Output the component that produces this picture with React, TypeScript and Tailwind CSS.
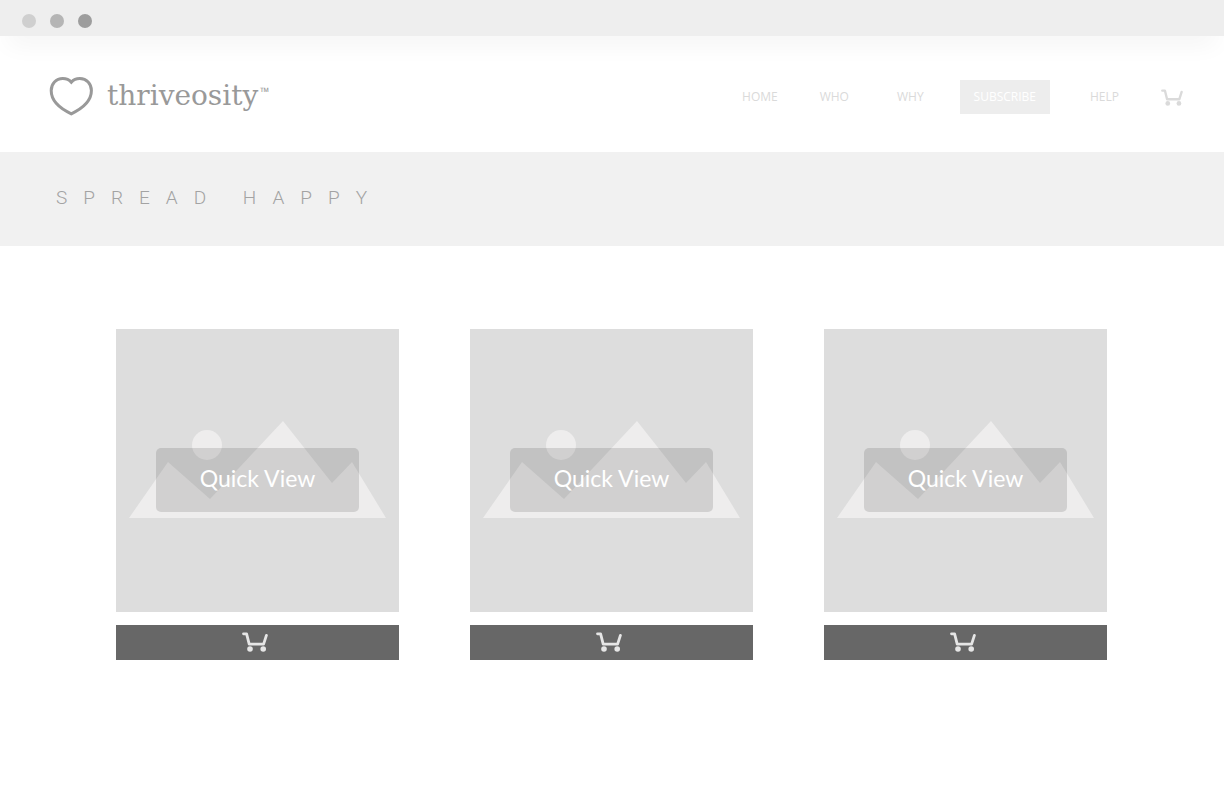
import React from 'react';

interface IconProps {
  className?: string;
}

interface Product {
  id: number;
  name: string;
}

const products: Product[] = [
  { id: 1, name: 'Product 1' },
  { id: 2, name: 'Product 2' },
  { id: 3, name: 'Product 3' }
];

function CartIcon({ className }: IconProps) {
  return (
    <svg className={className} viewBox="0 0 26 20" fill="none" aria-hidden="true">
      <path
        d="M1.5 1.8H4.6L7.2 12.1H21.6L24.4 3.4"
        stroke="currentColor"
        strokeWidth="2.8"
        strokeLinecap="round"
        strokeLinejoin="round"
      />
      <circle cx="8" cy="17" r="2.8" fill="currentColor" />
      <circle cx="21.2" cy="17" r="2.8" fill="currentColor" />
    </svg>
  );
}

function HeartLogo({ className }: IconProps) {
  return (
    <svg className={className} viewBox="0 0 44 40" fill="none" aria-hidden="true">
      <path
        d="M22.3 5.2C20 2.6 17 1.6 13.8 1.6C7 1.6 2.2 6.6 2.2 13.6C2.2 23.4 11 31.6 22.3 36.8C33.4 31.6 42.4 23.4 42.4 13.6C42.4 6.6 37.6 1.6 30.8 1.6C27.6 1.6 24.6 2.6 22.3 5.2Z"
        stroke="currentColor"
        strokeWidth="3"
      />
    </svg>
  );
}

function ProductCard({ product }: { product: Product }) {
  return (
    <article>
      <div className="relative aspect-square bg-[#dddddd]">
        <svg className="w-full h-full" viewBox="0 0 283 283" fill="#eeeded" aria-hidden="true">
          <path d="M13 189L52 133L94 170L167 92L216 154L236 133L270 189Z" />
          <circle cx="91" cy="116" r="15" />
        </svg>
        <button
          type="button"
          className="absolute inset-x-[14%] top-[42%] h-16 rounded-[5px] bg-black/12 pb-1 font-['Lato',sans-serif] text-[23px] text-white"
        >
          Quick View
        </button>
      </div>
      <button
        type="button"
        aria-label={`Add ${product.name} to cart`}
        className="mt-[13px] flex h-[35px] w-full items-center justify-center bg-[#676767] pb-0.5 text-[#e6e6e6]"
      >
        <CartIcon className="h-5 w-[26px] mr-1.5" />
      </button>
    </article>
  );
}

export default function App() {
  return (
    <div className="min-h-screen bg-white font-['Open_Sans',sans-serif]">
      {/* Window bar */}
      <div className="relative z-10 flex h-9 items-center gap-3.5 bg-[#eeeeee] px-[22px] pt-[5px] shadow-[0_16px_24px_-8px_rgba(0,0,0,0.05)]">
        <span className="size-3.5 rounded-full bg-[#cfcfcf]" />
        <span className="size-3.5 rounded-full bg-[#b5b5b5]" />
        <span className="size-3.5 rounded-full bg-[#9d9d9d]" />
      </div>

      <header className="flex items-center justify-between pt-[41px] pb-[35px] pl-[49px] pr-[41px]">
        <a href="#home" className="flex items-center text-[#999999]">
          <HeartLogo className="h-10 w-11" />
          <span className="ml-3.5 pb-0.5 font-['DejaVu_Serif',serif] text-[28px] leading-9">
            thriveosity
          </span>
          <span className="ml-0.5 mb-2.5 text-xs leading-3">™</span>
        </a>

        <nav className="flex items-center text-xs text-[#dadada]">
          <a href="#home">HOME</a>
          <a href="#who" className="ml-[42px]">WHO</a>
          <a href="#why" className="ml-12">WHY</a>
          <a href="#subscribe" className="ml-9 bg-[#ededed] px-3.5 py-2 leading-[18px] text-white">SUBSCRIBE</a>
          <a href="#help" className="ml-10">HELP</a>
          <a href="#cart" aria-label="Cart" className="ml-[42px]">
            <CartIcon className="h-[17px] w-[22px]" />
          </a>
        </nav>
      </header>

      <section className="bg-[#f1f1f1] px-14 pt-8 pb-[34px]">
        <h1 className="font-['Roboto',sans-serif] text-[19px] leading-7 font-light tracking-[16px] text-[#a3a3a3]">
          SPREAD HAPPY
        </h1>
      </section>

      <main className="grid grid-cols-3 gap-[71px] pl-[116px] pr-[117px] pt-[83px] pb-16">
        {products.map((product) => (
          <ProductCard key={product.id} product={product} />
        ))}
      </main>
    </div>
  );
}
